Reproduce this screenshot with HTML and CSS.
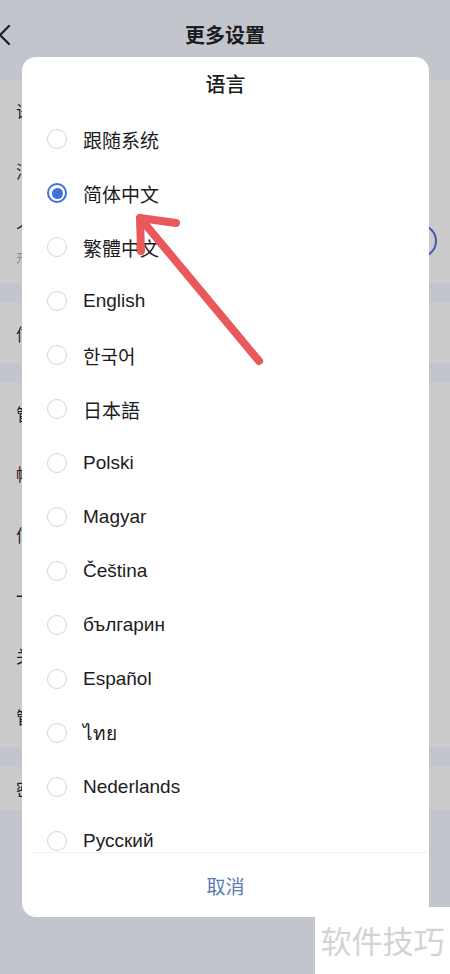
FILE: index.html
```html
<!DOCTYPE html>
<html lang="zh-CN">
<head>
    <meta charset="UTF-8">
    <meta name="viewport" content="width=device-width, initial-scale=1.0">
    <title>更多设置</title>
    <link rel="stylesheet" href="styles.css">
</head>
<body>
    <!-- Page behind the dialog (dimmed) -->
    <div class="page">
        <div class="topbar">
            <svg class="back" width="14" height="24" viewBox="0 0 14 24"><path d="M11 3 L2 12 L11 21" fill="none" stroke="#1c1c1e" stroke-width="2.2" stroke-linecap="round" stroke-linejoin="round"/></svg>
            <span class="topbar-title">更多设置</span>
        </div>

        <div class="group">
            <div class="row r1">语言</div>
            <div class="row r2">消息</div>
            <div class="row r3">
                <div>
                    <div>个性</div>
                    <div class="sub">开启</div>
                </div>
                <span class="switch"></span>
            </div>
        </div>
        <div class="group g2">
            <div class="row">信息</div>
        </div>
        <div class="group g3">
            <div class="row">管理</div>
            <div class="row">帐号</div>
            <div class="row">信息</div>
            <div class="row">一键</div>
            <div class="row">关于</div>
            <div class="row">管理</div>
        </div>
        <div class="group g4">
            <div class="row">密码</div>
        </div>
    </div>

    <!-- Language picker -->
    <div class="dialog">
        <div class="dialog-title">语言</div>
        <div class="lang-list">
            <div class="lang"><span class="radio"></span>跟随系统</div>
            <div class="lang"><span class="radio checked"></span>简体中文</div>
            <div class="lang"><span class="radio"></span>繁體中文</div>
            <div class="lang"><span class="radio"></span>English</div>
            <div class="lang"><span class="radio"></span>한국어</div>
            <div class="lang"><span class="radio"></span>日本語</div>
            <div class="lang"><span class="radio"></span>Polski</div>
            <div class="lang"><span class="radio"></span>Magyar</div>
            <div class="lang"><span class="radio"></span>Čeština</div>
            <div class="lang"><span class="radio"></span>българин</div>
            <div class="lang"><span class="radio"></span>Español</div>
            <div class="lang"><span class="radio"></span>ไทย</div>
            <div class="lang"><span class="radio"></span>Nederlands</div>
            <div class="lang"><span class="radio"></span>Русский</div>
        </div>
        <div class="dialog-footer">取消</div>
    </div>

    <!-- hand-drawn pointer -->
    <svg class="arrow" width="450" height="974" viewBox="0 0 450 974">
        <g fill="none" stroke="#e9585a" stroke-width="8" stroke-linecap="round" stroke-linejoin="round">
            <path d="M259 361 L140 218"/>
            <path d="M176 223 L140 218 L141 251"/>
        </g>
    </svg>

    <div class="stamp">软件技巧</div>
</body>
</html>
```

FILE: styles.css
```css
body {
    margin: 0;
    padding: 0;
    width: 450px;
    height: 974px;
    overflow: hidden;
    background-color: #c3c5cd;
    font-family: "Liberation Sans", "Noto Sans CJK SC", "DejaVu Sans", sans-serif;
    color: #1c1c1e;
    position: relative;
}

/* background page */
.page { display: flex; flex-direction: column; }
.topbar {
    height: 80px;
    display: flex;
    align-items: center;
    justify-content: center;
    position: relative;
    padding-bottom: 12px;
    box-sizing: border-box;
}
.back { position: absolute; left: -2px; top: 23px; }
.topbar-title {
    font-family: "Noto Sans CJK SC", sans-serif;
    font-size: 20px;
    font-weight: 700;
}
.group { background-color: #cbcbcb; display: flex; flex-direction: column; }
.g2, .g3, .g4 { margin-top: 20px; }
.row {
    display: flex;
    align-items: center;
    justify-content: space-between;
    padding: 0 13px 0 16px;
    font-size: 17px;
    font-family: "Noto Sans CJK SC", sans-serif;
}
.r1 { height: 61px; }
.r2 { height: 58px; }
.r3 { height: 84px; }
.sub { font-size: 12px; color: #8a8a8e; margin-top: 8px; }
.switch {
    width: 30px;
    height: 30px;
    border: 2px solid #4b56b5;
    border-radius: 50%;
}
.g2 .row { height: 60px; }
.g3 .row { height: 60.6px; }
.g4 .row { height: 43px; }

/* dialog */
.dialog {
    position: absolute;
    left: 22px;
    top: 57px;
    width: 407px;
    height: 860px;
    background-color: #fff;
    border-radius: 14px;
    display: flex;
    flex-direction: column;
    overflow: hidden;
}
.dialog-title {
    height: 55px;
    display: flex;
    align-items: center;
    justify-content: center;
    font-family: "Noto Sans CJK SC", sans-serif;
    font-size: 20px;
    font-weight: 500;
    color: #1c1c1e;
    padding-bottom: 3px;
    box-sizing: border-box;
}
.lang-list { height: 740px; overflow: hidden; }
.lang {
    height: 54px;
    display: flex;
    align-items: center;
    gap: 16px;
    padding-left: 25px;
    font-size: 19px;
    color: #1c1c1e;
}
.radio {
    width: 20px;
    height: 20px;
    box-sizing: border-box;
    border: 1.5px solid #d4d4d6;
    border-radius: 50%;
    flex-shrink: 0;
    display: flex;
    align-items: center;
    justify-content: center;
}
.radio.checked { border: 2px solid #3e6fe3; }
.radio.checked::after {
    content: "";
    width: 11px;
    height: 11px;
    border-radius: 50%;
    background-color: #3e6fe3;
}
.dialog-footer {
    flex: 1;
    margin-left: 10px;
    border-top: 1px solid #f0f0f2;
    display: flex;
    align-items: center;
    justify-content: center;
    padding-right: 10px;
    font-family: "Noto Sans CJK SC", sans-serif;
    font-size: 19px;
    color: #5b79b3;
}

.arrow { position: absolute; left: 0; top: 0; pointer-events: none; }

.stamp {
    position: absolute;
    left: 315px;
    top: 907px;
    width: 135px;
    height: 67px;
    background-color: #fff;
    display: flex;
    align-items: center;
    justify-content: center;
    font-family: "Noto Sans CJK SC", sans-serif;
    font-size: 31px;
    color: #d3d3d3;
    padding-bottom: 2px;
    box-sizing: border-box;
}
```
